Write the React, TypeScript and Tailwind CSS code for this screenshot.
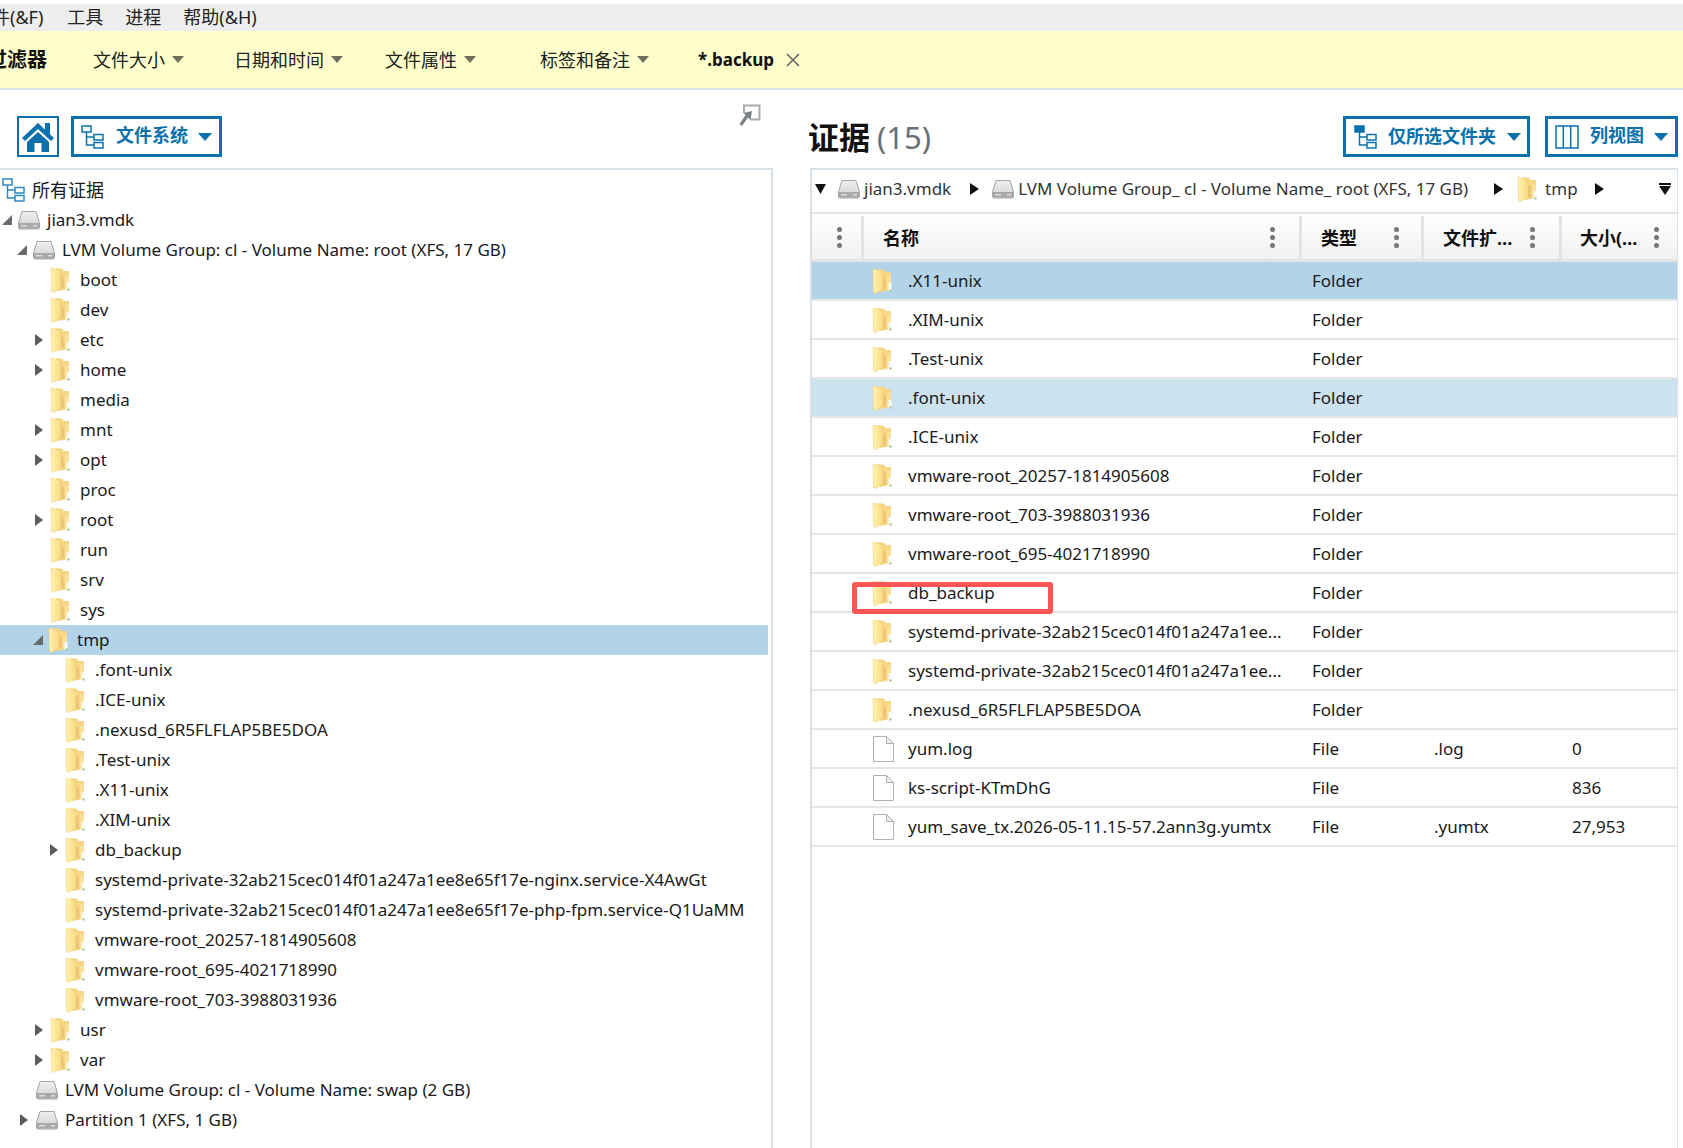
import React from "react";

const BLUE = "#0a71ad";

function Folder() {
  return (
    <svg width="21" height="26" viewBox="0 0 21 26" className="shrink-0">
      <defs>
        <linearGradient id="fflap" x1="0" y1="0" x2="1" y2="0">
          <stop offset="0" stopColor="#fff3b8" />
          <stop offset="0.5" stopColor="#fde795" />
          <stop offset="1" stopColor="#f8d985" />
        </linearGradient>
      </defs>
      <path d="M6 1 L13 2 L13 4 L19 4 V22 L8 24 Z" fill="#f8d582" />
      <path d="M15 8 H19 V22 H15 Z" fill="#fbe09a" />
      <path d="M16.5 15 L19.5 15 L19.5 23 L16.5 23 Z" fill="#fbfaf0" />
      <path d="M1 1 L10 3.5 L11 9 V21 L3.5 25.5 L1.5 24.5 Z" fill="url(#fflap)" stroke="#ecd07c" strokeWidth="0.6" />
      <path d="M11 9 V22 L14 21 V11 Z" fill="#e0bb6c" opacity="0.55" />
      <rect x="17.5" y="21.5" width="2" height="2" fill="#8fc482" />
    </svg>
  );
}

function Drive() {
  return (
    <svg width="24" height="20" viewBox="0 0 24 20" className="shrink-0">
      <defs>
        <linearGradient id="dtop" x1="0" y1="0" x2="0" y2="1">
          <stop offset="0" stopColor="#f0f0f0" />
          <stop offset="1" stopColor="#cfcfcf" />
        </linearGradient>
      </defs>
      <path d="M5 1.5 H19 L22.5 13 V17.5 Q22.5 19 21 19 H3 Q1.5 19 1.5 17.5 V13 Z" fill="url(#dtop)" stroke="#a5a5a5" />
      <rect x="2" y="13" width="20" height="5.5" fill="#a9a9a9" />
      <rect x="4" y="15" width="6" height="1.5" fill="#dcdcdc" />
      <rect x="16" y="15" width="4" height="1.5" fill="#dcdcdc" />
    </svg>
  );
}

function FileIcon() {
  return (
    <svg width="21" height="26" viewBox="0 0 21 26" className="shrink-0 ml-[1px] mr-[-1px]">
      <path d="M0.5 0.5 H13.5 L20.5 7.5 V25.5 H0.5 Z" fill="#fff" stroke="#b0b0b0" />
      <path d="M13.5 0.5 V7.5 H20.5 Z" fill="#eeeeee" stroke="#b0b0b0" />
    </svg>
  );
}

function TreeIcon({ size = 24, color = BLUE, solid = false }: { size?: number; color?: string; solid?: boolean }) {
  return (
    <svg width={size} height={size} viewBox="0 0 24 24" fill="none" stroke={color} strokeWidth="1.5" className="shrink-0">
      <rect x="1" y="1" width="9" height="6" fill={solid ? color : "#fff"} />
      <rect x="13" y="9.5" width="9" height="5.5" fill="#fff" />
      <rect x="13" y="17.5" width="9" height="5.5" fill="#fff" />
      <path d="M5.5 7 V20 H13 M5.5 12 H13" />
    </svg>
  );
}

function Home() {
  return (
    <svg width="34" height="32" viewBox="0 0 34 32">
      <path d="M17 2 L33 17 L30 20 L17 8 L4 20 L1 17 Z" fill={BLUE} />
      <rect x="24" y="2" width="5" height="11" fill={BLUE} />
      <path d="M17 11 L28 21 V31 H20.5 V22 H13.5 V31 H6 V21 Z" fill={BLUE} />
    </svg>
  );
}

function Pin() {
  return (
    <svg width="22" height="23" viewBox="0 0 22 23" fill="none">
      <path d="M5 9 V1.5 H20.5 V15.5 H11" stroke="#a8acb0" strokeWidth="2" />
      <path d="M13 7 L11.5 16 L9 13.5 L3 22 L0.5 20 L6.5 11 L4.5 9 Z" fill="#7d8186" />
    </svg>
  );
}

function ColumnsIcon() {
  return (
    <svg width="24" height="24" viewBox="0 0 24 24" fill="none" stroke={BLUE} strokeWidth="1.5" className="shrink-0">
      <rect x="1" y="1" width="22" height="22" />
      <path d="M8.3 1 V23 M15.7 1 V23" />
    </svg>
  );
}

function Caret({ color = "#6f6f5e", w = 12, h = 7 }: { color?: string; w?: number; h?: number }) {
  return (
    <svg width={w} height={h} viewBox="0 0 12 7" preserveAspectRatio="none" className="shrink-0">
      <path d="M0 0 H12 L6 7 Z" fill={color} />
    </svg>
  );
}

function Kebab() {
  return (
    <span className="flex flex-col gap-[3px] shrink-0">
      <i className="block w-[5px] h-[5px] rounded-full bg-[#777777]" />
      <i className="block w-[5px] h-[5px] rounded-full bg-[#777777]" />
      <i className="block w-[5px] h-[5px] rounded-full bg-[#777777]" />
    </span>
  );
}

type Node = { label: string; indent: number; kind: "folder" | "drive"; arrow?: "open" | "closed"; selected?: boolean; gap?: number };

const f = (label: string, indent: number, arrow?: "open" | "closed"): Node => ({ label, indent, kind: "folder", arrow });

const tree: Node[] = [
  { label: "jian3.vmdk", indent: 2, kind: "drive", arrow: "open", gap: 6 },
  { label: "LVM Volume Group: cl - Volume Name: root (XFS, 17 GB)", indent: 17, kind: "drive", arrow: "open", gap: 6 },
  f("boot", 35),
  f("dev", 35),
  f("etc", 35, "closed"),
  f("home", 35, "closed"),
  f("media", 35),
  f("mnt", 35, "closed"),
  f("opt", 35, "closed"),
  f("proc", 35),
  f("root", 35, "closed"),
  f("run", 35),
  f("srv", 35),
  f("sys", 35),
  { label: "tmp", indent: 33, kind: "folder", arrow: "open", selected: true, gap: 8 },
  f(".font-unix", 50),
  f(".ICE-unix", 50),
  f(".nexusd_6R5FLFLAP5BE5DOA", 50),
  f(".Test-unix", 50),
  f(".X11-unix", 50),
  f(".XIM-unix", 50),
  f("db_backup", 50, "closed"),
  f("systemd-private-32ab215cec014f01a247a1ee8e65f17e-nginx.service-X4AwGt", 50),
  f("systemd-private-32ab215cec014f01a247a1ee8e65f17e-php-fpm.service-Q1UaMM", 50),
  f("vmware-root_20257-1814905608", 50),
  f("vmware-root_695-4021718990", 50),
  f("vmware-root_703-3988031936", 50),
  f("usr", 35, "closed"),
  f("var", 35, "closed"),
  { label: "LVM Volume Group: cl - Volume Name: swap (2 GB)", indent: 20, kind: "drive", gap: 6 },
  { label: "Partition 1 (XFS, 1 GB)", indent: 20, kind: "drive", arrow: "closed", gap: 6 },
];

function TreeRow({ n }: { n: Node }) {
  return (
    <div className={`flex items-center h-[30px] mr-[3px] ${n.selected ? "bg-[#b3d4e8]" : ""}`} style={{ paddingLeft: n.indent }}>
      <span className="w-[15px] shrink-0 flex items-center">
        {n.arrow === "open" && (
          <svg width="10" height="10" viewBox="0 0 10 10"><path d="M10 0 V10 H0 Z" fill="#666b70" /></svg>
        )}
        {n.arrow === "closed" && (
          <svg width="8" height="12" viewBox="0 0 8 12"><path d="M0 0 L8 6 L0 12 Z" fill="#5c5c5c" /></svg>
        )}
      </span>
      {n.kind === "folder" ? <Folder /> : <Drive />}
      <span className="whitespace-nowrap text-[#1a1a1a]" style={{ marginLeft: n.gap ?? 9 }}>{n.label}</span>
    </div>
  );
}

type Row = { name: string; type: string; ext?: string; size?: string; bg?: string };
const fo = (name: string, bg?: string): Row => ({ name, type: "Folder", bg });
const rows: Row[] = [
  fo(".X11-unix", "bg-[#b3d4e8]"),
  fo(".XIM-unix"),
  fo(".Test-unix"),
  fo(".font-unix", "bg-[#cde2ef]"),
  fo(".ICE-unix"),
  fo("vmware-root_20257-1814905608"),
  fo("vmware-root_703-3988031936"),
  fo("vmware-root_695-4021718990"),
  fo("db_backup"),
  fo("systemd-private-32ab215cec014f01a247a1ee..."),
  fo("systemd-private-32ab215cec014f01a247a1ee..."),
  fo(".nexusd_6R5FLFLAP5BE5DOA"),
  { name: "yum.log", type: "File", ext: ".log", size: "0" },
  { name: "ks-script-KTmDhG", type: "File", size: "836" },
  { name: "yum_save_tx.2026-05-11.15-57.2ann3g.yumtx", type: "File", ext: ".yumtx", size: "27,953" },
];

const GRID = "grid grid-cols-[52px_438px_122px_138px_116px]";

function HeadCell({ label, pl, pr }: { label: string; pl: string; pr: string }) {
  return (
    <div className={`flex items-center justify-between h-full border-r-[3px] border-[#e3e3e3] last:border-r-0 ${pl} ${pr}`}>
      <span className="font-bold text-[18px] text-[#111] whitespace-nowrap">{label}</span>
      <Kebab />
    </div>
  );
}

function OutlineBtn({ children, className }: { children: React.ReactNode; className: string }) {
  return <div className={`flex items-center h-[41px] border-[3px] border-[#0a71ad] ${className}`}>{children}</div>;
}

export default function App() {
  return (
    <div className="relative w-[1683px] h-[1148px] overflow-hidden bg-white text-[17px] leading-[26px] font-['Noto_Sans','Noto_Sans_CJK_SC',sans-serif] text-[#1a1a1a]">
      <div className="h-[4px] bg-white" />
      <div className="flex items-center h-[27px] pb-[2px] bg-[#eeeeee] text-[18px] ml-[-10px] whitespace-nowrap text-[#222]">
        <span className="ml-[2px]">件(&amp;F)</span>
        <span className="ml-[24px]">工具</span>
        <span className="ml-[22px]">进程</span>
        <span className="ml-[22px]">帮助(&amp;H)</span>
      </div>

      <div className="flex items-center h-[57px] bg-[#ffffcc] whitespace-nowrap text-[#222] text-[18px]">
        <span className="ml-[-13px] font-bold text-[20px] text-[#111]">过滤器</span>
        <span className="ml-[46px]">文件大小</span>
        <span className="ml-[7px]"><Caret /></span>
        <span className="ml-[50px]">日期和时间</span>
        <span className="ml-[7px]"><Caret /></span>
        <span className="ml-[42px]">文件属性</span>
        <span className="ml-[7px]"><Caret /></span>
        <span className="ml-[64px]">标签和备注</span>
        <span className="ml-[7px]"><Caret /></span>
        <span className="ml-[49px] font-bold text-[17px] text-[#111]">*.backup</span>
        <svg width="14" height="14" viewBox="0 0 14 14" className="ml-[12px]"><path d="M1 1 L13 13 M13 1 L1 13" stroke="#666" strokeWidth="1.6" /></svg>
      </div>
      <div className="h-[2px] bg-[#dbe3ea]" />

      <div className="flex h-[1058px]">
        <div className="w-[773px] shrink-0 flex flex-col">
          <div className="flex items-start h-[78px] pl-[17px] pr-[12px]">
            <div className="flex items-center justify-center w-[42px] h-[41px] mt-[26px] border-2 border-[#0a71ad]"><Home /></div>
            <OutlineBtn className="w-[151px] mt-[26px] ml-[12px] pl-[7px]">
              <TreeIcon />
              <span className="ml-[11px] mb-[3px] font-bold text-[#0a71ad] text-[18px] whitespace-nowrap">文件系统</span>
              <span className="ml-[10px]"><Caret color={BLUE} w={14} h={8} /></span>
            </OutlineBtn>
            <div className="ml-auto mt-[14px]"><Pin /></div>
          </div>
          <div className="flex-1 border-t-2 border-r-2 border-[#d8e0e8] pt-[5px]">
            <div className="flex items-center h-[30px] pl-[2px]">
              <TreeIcon color="#2b8bc4" />
              <span className="ml-[6px] text-[18px] whitespace-nowrap">所有证据</span>
            </div>
            {tree.map((n, i) => <TreeRow key={i} n={n} />)}
          </div>
        </div>

        <div className="ml-[37px] w-[868px] shrink-0 flex flex-col">
          <div className="flex items-start h-[78px]">
            <div className="mt-[27px] ml-[-2px] whitespace-nowrap text-[31px] leading-[40px]">
              <span className="font-bold text-[#111]">证据</span>
              <span className="ml-[7px] text-[#6b6f73]">(15)</span>
            </div>
            <OutlineBtn className="ml-auto w-[187px] mt-[26px] pl-[8px]">
              <TreeIcon solid />
              <span className="ml-[10px] mb-[1px] font-bold text-[#0a71ad] text-[18px] whitespace-nowrap">仅所选文件夹</span>
              <span className="ml-[11px]"><Caret color={BLUE} w={14} h={8} /></span>
            </OutlineBtn>
            <OutlineBtn className="ml-[15px] w-[133px] mt-[26px] pl-[7px]">
              <ColumnsIcon />
              <span className="ml-[11px] mb-[3px] font-bold text-[#0a71ad] text-[18px] whitespace-nowrap">列视图</span>
              <span className="ml-[10px]"><Caret color={BLUE} w={14} h={8} /></span>
            </OutlineBtn>
          </div>

          <div className="flex-1 border-t-2 border-l-2 border-r border-[#d8e0e8]">
            <div className="flex items-center h-[42px] pb-[4px] whitespace-nowrap text-[#333]">
              <svg width="11" height="10" viewBox="0 0 11 10" className="ml-[3px]"><path d="M0 0 H11 L5.5 10 Z" fill="#111" /></svg>
              <span className="ml-[11px]"><Drive /></span>
              <span className="ml-[3px]">jian3.vmdk</span>
              <svg width="9" height="12" viewBox="0 0 9 12" className="ml-[19px]"><path d="M0 0 L9 6 L0 12 Z" fill="#111" /></svg>
              <span className="ml-[12px]"><Drive /></span>
              <span className="ml-[3px]">LVM Volume Group_ cl - Volume Name_ root (XFS, 17 GB)</span>
              <svg width="9" height="12" viewBox="0 0 9 12" className="ml-[26px]"><path d="M0 0 L9 6 L0 12 Z" fill="#111" /></svg>
              <span className="ml-[14px]"><Folder /></span>
              <span className="ml-[7px]">tmp</span>
              <svg width="9" height="12" viewBox="0 0 9 12" className="ml-[17px]"><path d="M0 0 L9 6 L0 12 Z" fill="#111" /></svg>
              <svg width="12" height="12" viewBox="0 0 12 12" className="ml-auto mr-[6px]"><path d="M0 0 H12 V2 H0 Z M0 3 H12 L6 12 Z" fill="#111" /></svg>
            </div>

            <div className={`${GRID} h-[50px] pt-[2px] border-t-2 border-b-[3px] border-[#e3e3e3] bg-gradient-to-b from-white to-[#f1f1f1]`}>
              <div className="flex items-center justify-center pl-[5px] h-full border-r-[3px] border-[#e3e3e3]"><Kebab /></div>
              <HeadCell label="名称" pl="pl-[19px]" pr="pr-[24px]" />
              <HeadCell label="类型" pl="pl-[19px]" pr="pr-[22px]" />
              <HeadCell label="文件扩…" pl="pl-[19px]" pr="pr-[24px]" />
              <HeadCell label="大小(…" pl="pl-[18px]" pr="pr-[19px]" />
            </div>

            {rows.map((r, i) => (
              <div key={i} className={`${GRID} h-[39px] items-center border-b-2 border-[#e6e6e6] ${r.bg ?? ""}`}>
                <span />
                <div className="flex items-center pl-[8px]">
                  {r.type === "Folder" ? <Folder /> : <FileIcon />}
                  <span className="ml-[15px] whitespace-nowrap">{r.name}</span>
                </div>
                <span className="pl-[10px]">{r.type}</span>
                <span className="pl-[10px]">{r.ext}</span>
                <span className="pl-[10px]">{r.size}</span>
              </div>
            ))}
          </div>
        </div>
      </div>

      <div className="absolute left-[852px] top-[582px] w-[201px] h-[32px] border-[5px] border-[#ff5555] rounded-[3px]" />
    </div>
  );
}
